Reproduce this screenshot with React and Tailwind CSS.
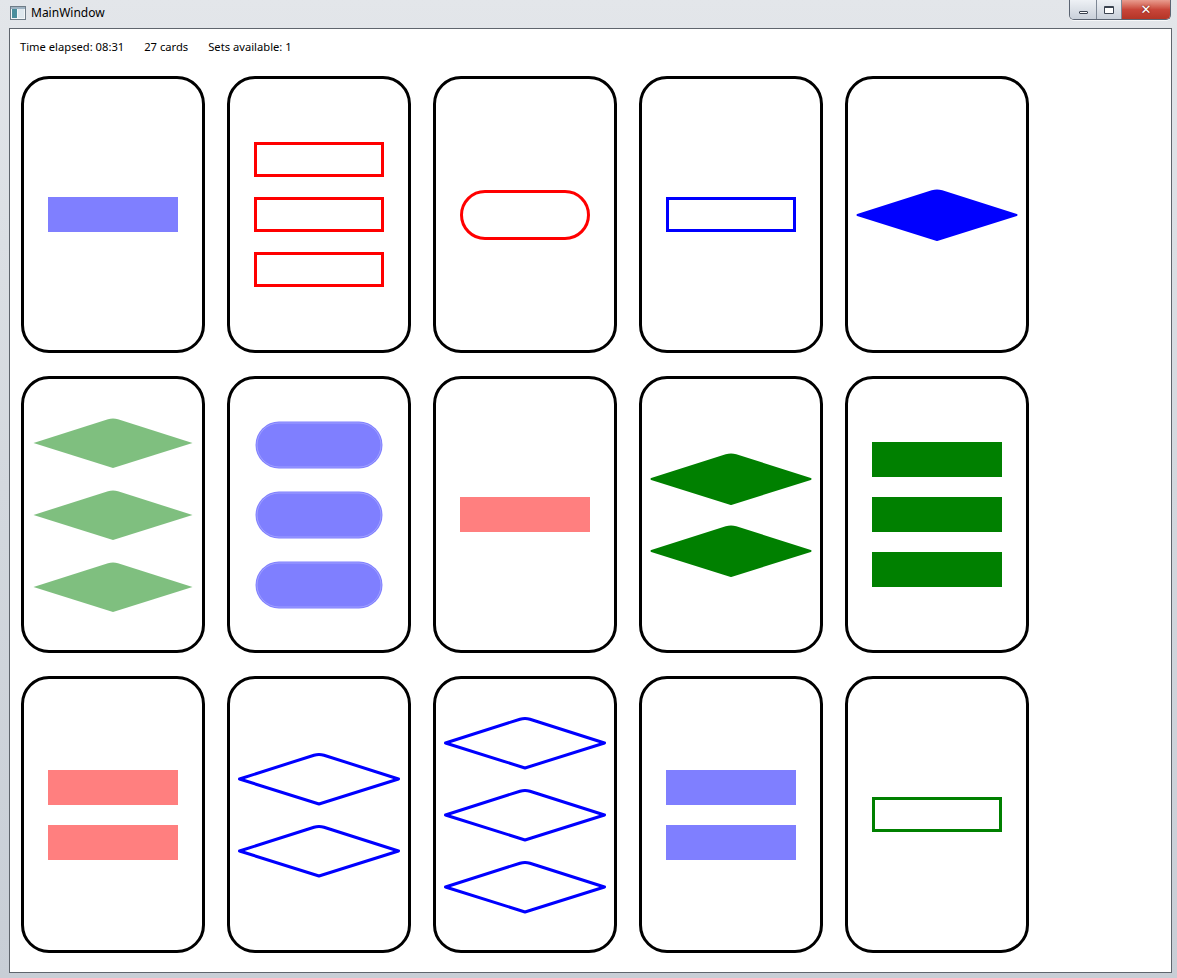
import React from 'react';

const COLORS = { red: '#ff0000', green: '#008000', blue: '#0000ff' };

const cards = [
    { n: 1, shape: 'rect', fill: 'shaded', color: 'blue' },
    { n: 3, shape: 'rect', fill: 'outline', color: 'red' },
    { n: 1, shape: 'oval', fill: 'outline', color: 'red' },
    { n: 1, shape: 'rect', fill: 'outline', color: 'blue' },
    { n: 1, shape: 'diamond', fill: 'solid', color: 'blue' },
    { n: 3, shape: 'diamond', fill: 'shaded', color: 'green' },
    { n: 3, shape: 'oval', fill: 'shaded', color: 'blue' },
    { n: 1, shape: 'rect', fill: 'shaded', color: 'red' },
    { n: 2, shape: 'diamond', fill: 'solid', color: 'green' },
    { n: 3, shape: 'rect', fill: 'solid', color: 'green' },
    { n: 2, shape: 'rect', fill: 'shaded', color: 'red' },
    { n: 2, shape: 'diamond', fill: 'outline', color: 'blue' },
    { n: 3, shape: 'diamond', fill: 'outline', color: 'blue' },
    { n: 2, shape: 'rect', fill: 'shaded', color: 'blue' },
    { n: 1, shape: 'rect', fill: 'outline', color: 'green' },
];

const Shape = ({ shape, fill, color }) => {
    const c = COLORS[color];
    const paint = fill === 'outline'
        ? { fill: 'none', stroke: c, strokeWidth: 3 }
        : fill === 'shaded'
            ? { fill: c, fillOpacity: 0.5, stroke: 'none' }
            : { fill: c, stroke: c, strokeWidth: 2, strokeLinejoin: 'round' };

    if (shape === 'rect') {
        return (
            <svg width="130" height="35" className="block">
                {fill === 'outline'
                    ? <rect x="1.5" y="1.5" width="127" height="32" {...paint} />
                    : <rect x="0" y="0" width="130" height="35" {...paint} />}
            </svg>
        );
    }
    if (shape === 'oval') {
        return (
            <svg width="130" height="50" className="block">
                <rect x="1.5" y="1.5" width="127" height="47" rx="23.5" {...paint} />
                {fill === 'shaded' && (
                    <rect x="3" y="3" width="124" height="44" rx="22" fill="none" stroke="#ffffff" strokeOpacity="0.25" strokeWidth="1" />
                )}
            </svg>
        );
    }
    // diamond, with a slightly blunted top and bottom
    return (
        <svg width="162" height="54" className="block">
            <path
                d="M1.5 27 L76 3.2 Q81 1.8 86 3.2 L160.5 27 L81 52 Z"
                {...paint}
                strokeLinejoin="round"
            />
        </svg>
    );
};

const gapFor = { rect: 'gap-5', oval: 'gap-5', diamond: 'gap-[18px]' };

const Card = ({ n, shape, fill, color }) => (
    <div className="w-[184px] h-[277px] rounded-[28px] border-[3px] border-black bg-white flex flex-col items-center justify-center">
        <div className={`flex flex-col items-center ${gapFor[shape]}`}>
            {Array.from({ length: n }).map((_, i) => (
                <Shape key={i} shape={shape} fill={fill} color={color} />
            ))}
        </div>
    </div>
);

const WindowButtons = () => (
    <div className="flex h-[20px] rounded-b-[5px] overflow-hidden border border-t-0 border-[#5b6472] shadow-[0_1px_0_rgba(255,255,255,0.7)]">
        <div className="w-[27px] flex items-end justify-center pb-[5px] bg-gradient-to-b from-[#eef1f5] to-[#c9d0da] border-r border-[#7d8795]">
            <div className="w-[9px] h-[3px] border border-[#3b4350] bg-white rounded-[1px]" />
        </div>
        <div className="w-[25px] flex items-center justify-center bg-gradient-to-b from-[#eef1f5] to-[#c9d0da] border-r border-[#7d8795]">
            <div className="w-[10px] h-[8px] border border-[#3b4350] border-t-2 bg-white rounded-[1px]" />
        </div>
        <div className="w-[48px] flex items-center justify-center bg-gradient-to-b from-[#e89c8f] via-[#c9463a] to-[#b43526]">
            <span className="text-white font-bold text-[13px] leading-none" style={{ fontFamily: '"DejaVu Sans", sans-serif', textShadow: '0 0 2px #5a1008' }}>✕</span>
        </div>
    </div>
);

export default function App() {
    return (
        <div
            className="w-[1177px] h-[978px] bg-gradient-to-b from-[#e3e6ea] via-[#d3d8de] to-[#c8ced6] flex flex-col overflow-hidden"
            style={{ fontFamily: '"Noto Sans", "Open Sans", sans-serif' }}
        >
            <div className="h-[28px] flex items-start justify-between">
                <div className="flex items-center h-[26px] pl-[10px] gap-[5px]">
                    <svg width="16" height="14" viewBox="0 0 16 14">
                        <rect x="0.5" y="0.5" width="15" height="13" fill="#f3f6f8" stroke="#6f7c87" />
                        <rect x="2" y="3" width="5" height="9" fill="#4a8e9c" />
                        <rect x="8" y="3" width="6" height="9" fill="#dfe8ee" />
                        <rect x="1" y="1" width="14" height="2" fill="#9fb3c2" />
                    </svg>
                    <span className="text-[12px] text-black">MainWindow</span>
                </div>
                <div className="mr-[6px]">
                    <WindowButtons />
                </div>
            </div>
            <div className="ml-[9px] mr-[5px] h-[945px] border border-[#5f656d] bg-white">
                <div className="flex gap-5 pl-[10px] pt-[10px] h-[16px] box-content text-[11.2px] leading-[16px] text-black">
                    <span>Time elapsed: 08:31</span>
                    <span>27 cards</span>
                    <span>Sets available: 1</span>
                </div>
                <div className="grid grid-cols-[repeat(5,184px)] gap-x-[22px] gap-y-[23px] pl-[11px] mt-[21px]">
                    {cards.map((c, i) => (
                        <Card key={i} {...c} />
                    ))}
                </div>
            </div>
        </div>
    );
}
